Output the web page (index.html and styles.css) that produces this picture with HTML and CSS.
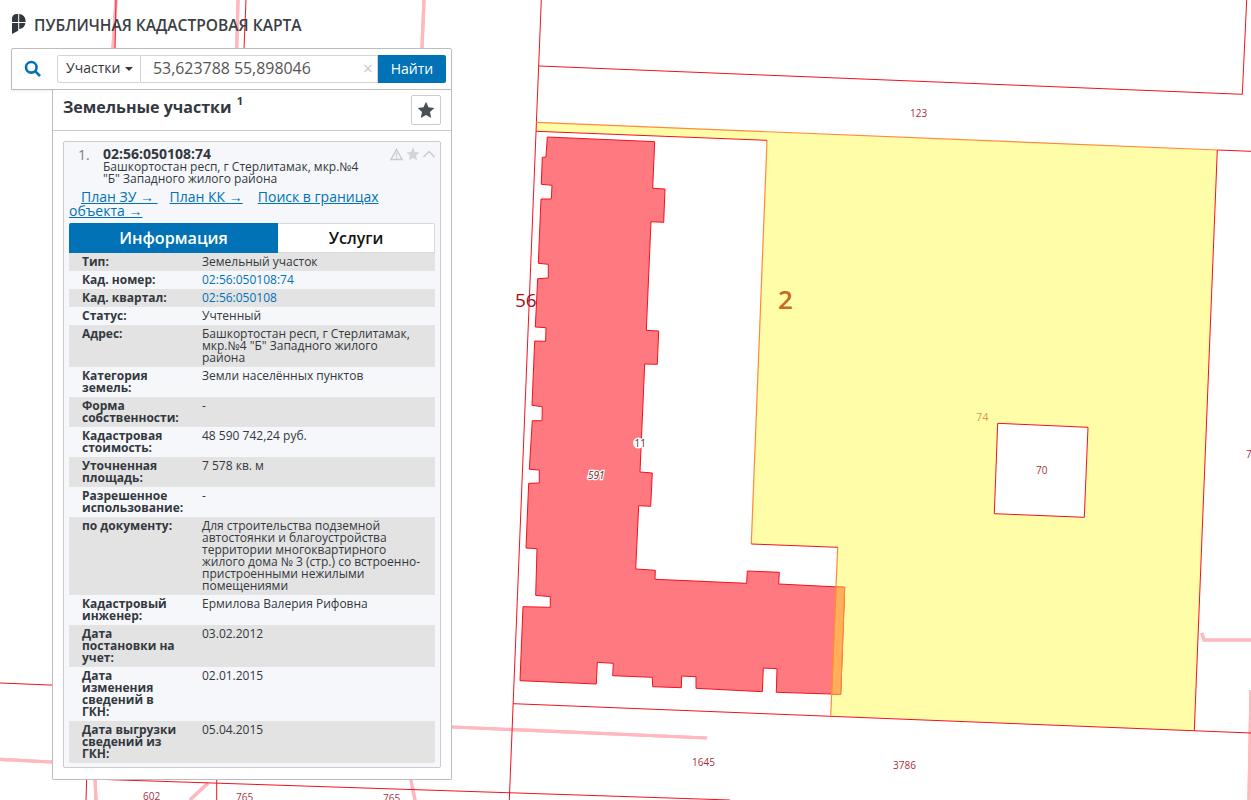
FILE: index.html
```html
<!DOCTYPE html>
<html lang="ru">
<head>
<meta charset="utf-8">
<title>Публичная кадастровая карта</title>
<link rel="stylesheet" href="styles.css">
</head>
<body>
<svg class="map" width="1251" height="800" viewBox="0 0 1251 800">
  <g id="pinks" class="pink">
    <polyline points="116,0 113,48"/>
    <polyline points="238,0 236.7,48"/>
    <polyline points="424,0 422,48"/>
    <polyline points="0,759.3 52,762"/>
    <polyline points="452,727 707,738"/>
    <polyline points="95,779 96,800"/>
    <polyline points="208,783 190,800"/>
    <polyline points="410.7,779 415,800"/>
    <polyline points="1201.7,633 1204,640 1251,640"/>
    <polyline points="1251,690 1249,800"/>
  </g>
  <use href="#pinks" class="pink-core"/>
  <path class="yellow" fill-rule="evenodd" d="M536.3 122.3 1217.3 150 1194.3 730.7 830.7 715.7 837.7 547.3 751.3 544 767 140.3 536 131.3ZM997.7 423.3 994.3 513.7 1084.3 517.3 1088 427.3Z"/>
  <polygon class="red" points="547.3,137 654.7,141.7 652.7,188.3 665,189 663.7,222.3 651,221.7 646.3,330.3 658.7,331 657.3,364.3 644.7,364 640,472 652.3,473 650.7,506.3 638.7,505.7 635.7,569 655.3,570.3 655,579.3 746.7,583.3 747.3,571 779.3,572.3 778.7,584 844.7,587.3 840.7,694.3 776.3,692.3 777,668.7 763.3,668 762.3,691.7 696,688.3 696,676.7 681.7,676 681.3,687.7 652.7,686.7 652.3,677.3 612.7,675.7 613.3,663.3 597.3,662.3 596.3,684 520,680.7 523,606.7 550.3,607.3 550.3,596.7 535.7,595.3 537,548.7 526,548 528.7,483.3 539.3,483 539.3,470 529.3,469.3 532.3,420.7 542,420.7 542.3,406.7 532,405.3 534.7,341 545.7,341.3 546,327.7 535.3,327 537.7,278.7 548.3,278 548.3,264.3 538.3,263.3 541,199 551.3,199 552,185.3 541.3,184.3 542.3,157.3 546,157"/>
  <polygon class="overlap" points="836,587 844.7,587.3 840.7,694.3 831.6,694"/>
  <g class="lines">
    <polyline points="541.3,0 509.3,800"/>
    <polyline points="539,66 1242.3,94.3 1246.7,0"/>
    <polyline points="1217.3,150 1251,151.3"/>
    <polyline points="0,683 200,691"/>
    <polyline points="513.3,703.7 1251,733"/>
    <polyline points="90,779 730,800"/>
    <polyline points="86.7,779 86,800"/>
    <polyline points="216.7,779 216.7,800"/>
    <polyline points="246,0 244,48"/>
    <polyline points="116,0 115,48"/>
  </g>
  <g class="edge-orange">
    <polyline points="536.3,122.3 1217.3,150"/>
    <polyline points="767,140.3 751.3,544"/>
    <polyline points="837.7,547.3 830.7,715.7"/>
  </g>
  <g class="lines">
    <polyline points="536,131.3 767,140.3"/>
    <polyline points="1217.3,150 1194.3,730.7"/>
    <polyline points="751.3,544 837.7,547.3"/>
    <polygon points="997.7,423.3 994.3,513.7 1084.3,517.3 1088,427.3"/>
  </g>
  <circle class="blob" cx="638.5" cy="443" r="5.5"/>
  <text class="t-dark t-19" x="515" y="307">56</text>
  <text class="t-orange t-26" x="778" y="309">2</text>
  <text class="t-light t-11" x="976" y="421">74</text>
  <text class="t-red t-10" x="1036" y="474">70</text>
  <text class="t-red t-10" x="910" y="117">123</text>
  <text class="t-red t-10" x="692" y="766">1645</text>
  <text class="t-red t-10" x="893" y="769">3786</text>
  <text class="t-red t-10" x="1246" y="458">7</text>
  <text class="t-red t-10" x="143" y="800">602</text>
  <text class="t-red t-10" x="236" y="801">765</text>
  <text class="t-red t-10" x="383" y="802">765</text>
  <text class="t-halo t-10 t-it" x="588" y="479">591</text>
  <text class="t-ink t-10" x="634.5" y="447">11</text>
</svg>

<header class="brand">
  <svg class="logo" width="14" height="20" viewBox="0 0 14 20"><path d="M0 4.5A4.5 4.5 0 0 1 4.5 0H6.2V8H0ZM7.2 0A6.6 6.6 0 0 1 13.6 6.5V8H7.2ZM0 9H6.2V16.8L0 20ZM7.2 9H13.4A6.6 6.6 0 0 1 7.2 15Z"/></svg>
  <span class="brand-title">ПУБЛИЧНАЯ КАДАСТРОВАЯ КАРТА</span>
</header>

<div class="widget">
  <div class="search">
    <svg class="search-icon" width="18" height="18" viewBox="0 0 18 18"><circle cx="7.3" cy="7.3" r="5.3"/><line x1="11.2" y1="11.2" x2="16" y2="16"/></svg>
    <div class="search-group">
      <div class="select">Участки<span class="caret"></span></div>
      <div class="query"><span>53,623788 55,898046</span><span class="clear">×</span></div>
      <button class="go">Найти</button>
    </div>
  </div>
  <div class="results">
    <div class="results-head">
      <h2>Земельные участки <sup>1</sup></h2>
      <button class="fav"><svg width="18" height="18" viewBox="0 0 18 18"><path class="star-dark" d="M9 .8 11.5 6.3 17.3 7 13 11 14.2 17 9 14 3.8 17 5 11 .7 7 6.5 6.3Z"/></svg></button>
    </div>
    <div class="card">
      <div class="card-head">
        <span class="num">1.</span>
        <div class="card-title">
          <strong>02:56:050108:74</strong>
          <span>Башкортостан респ, г Стерлитамак, мкр.№4<br>"Б" Западного жилого района</span>
        </div>
        <div class="card-tools">
          <svg width="13" height="13" viewBox="0 0 13 13"><path class="tri" d="M6.5 1.5 12 11.5H1Z"/><path class="tri-mark" d="M6.5 4.7V8.5M6.5 9.3V10.5"/></svg>
          <svg width="14" height="14" viewBox="0 0 18 18"><path class="star-light" d="M9 .8 11.5 6.3 17.3 7 13 11 14.2 17 9 14 3.8 17 5 11 .7 7 6.5 6.3Z"/></svg>
          <svg width="12" height="8" viewBox="0 0 12 8"><polyline class="chev" points="0.5,7 6,1.5 11.5,7"/></svg>
        </div>
      </div>
      <p class="links"><a>План ЗУ →&nbsp;</a><a>План КК →</a><a>Поиск в границах объекта →</a></p>
      <div class="tabs"><div class="tab active">Информация</div><div class="tab">Услуги</div></div>
      <div class="rows">
        <div class="row"><b>Тип:</b><span>Земельный участок</span></div>
        <div class="row"><b>Кад. номер:</b><a>02:56:050108:74</a></div>
        <div class="row"><b>Кад. квартал:</b><a>02:56:050108</a></div>
        <div class="row"><b>Статус:</b><span>Учтенный</span></div>
        <div class="row"><b>Адрес:</b><span>Башкортостан респ, г Стерлитамак, мкр.№4 "Б" Западного жилого района</span></div>
        <div class="row"><b>Категория земель:</b><span>Земли населённых пунктов</span></div>
        <div class="row"><b>Форма собственности:</b><span>-</span></div>
        <div class="row"><b>Кадастровая стоимость:</b><span>48 590 742,24 руб.</span></div>
        <div class="row"><b>Уточненная площадь:</b><span>7 578 кв. м</span></div>
        <div class="row"><b>Разрешенное использование:</b><span>-</span></div>
        <div class="row"><b>по документу:</b><span>Для строительства подземной автостоянки и благоустройства территории многоквартирного жилого дома № 3 (стр.) со встроенно-пристроенными нежилыми помещениями</span></div>
        <div class="row"><b>Кадастровый инженер:</b><span>Ермилова Валерия Рифовна</span></div>
        <div class="row"><b>Дата постановки на учет:</b><span>03.02.2012</span></div>
        <div class="row"><b>Дата изменения сведений в ГКН:</b><span>02.01.2015</span></div>
        <div class="row"><b>Дата выгрузки сведений из ГКН:</b><span>05.04.2015</span></div>
      </div>
    </div>
  </div>
</div>
</body>
</html>
```

FILE: styles.css
```css
* { box-sizing: border-box; }
html, body { margin: 0; height: 800px; overflow: hidden; background: #fff; }
body { position: relative; font-family: "Open Sans", "Liberation Sans", sans-serif; color: #33383e; }

/* map */
.map { position: absolute; left: 0; top: 0; display: block; }
.map polyline, .map polygon { fill: none; }
.map .pink { stroke: #ffb8bd; stroke-width: 3.2; }
.map .pink-core { stroke: #ff8f98; stroke-width: 1; }
.map .lines polyline, .map .lines polygon { stroke: #f5101e; stroke-width: 1; }
.map .edge-orange polyline { stroke: #ff8a3c; stroke-width: 1.2; }
.map .yellow { fill: #fffda8; }
.map .red { fill: #ff7a80; stroke: #f5101e; stroke-width: 1; }
.map .overlap { fill: #ffae5a; stroke: #ff8a3c; stroke-width: 1; }
.map .blob { fill: #fff; }
.map text { font-family: "Open Sans", sans-serif; }
.t-10 { font-size: 10px; }
.t-11 { font-size: 11px; }
.t-19 { font-size: 19px; }
.t-26 { font-size: 26px; font-weight: 600; }
.t-it { font-style: italic; }
.t-red { fill: #a8303c; }
.t-dark { fill: #a80c16; }
.t-orange { fill: #c86a20; }
.t-light { fill: #dc9a4c; }
.t-ink { fill: #5a2a2e; }
.t-halo { fill: #6a1a20; stroke: #fff; stroke-width: 2.4; paint-order: stroke; }

/* brand */
.brand { position: absolute; left: 12px; top: 14px; display: flex; align-items: center; gap: 8px; height: 20px; }
.logo path { fill: #33383e; }
.brand-title { font-size: 15.55px; font-weight: 600; color: #3a3f45; line-height: 20px; white-space: nowrap; margin-top: 2px; }

/* widget */
.widget { position: absolute; left: 11px; top: 48px; width: 441px; }
.search { height: 42px; background: #fff; border: 1px solid #bcbcbc; border-radius: 2px 2px 0 0; display: flex; align-items: center; padding-left: 12px; box-shadow: 0 1px 2px rgba(0,0,0,.08); }
.search-icon { margin-right: 15px; flex: none; }
.search-icon circle, .search-icon line { fill: none; stroke: #0072b5; stroke-width: 2.6; }
.search-group { display: flex; width: 389px; height: 28px; }
.select { width: 84px; height: 28px; border: 1px solid #d4d4d4; border-radius: 2px 0 0 2px; font-size: 14px; line-height: 26px; padding: 0 0 2px 8px; color: #33383e; display: flex; align-items: center; gap: 5px; }
.caret { width: 0; height: 0; border-style: solid; border-width: 4px 4px 0; border-color: #33383e transparent transparent; margin-top: 2px; }
.query { flex: 1; height: 28px; border: 1px solid #d4d4d4; border-left: 0; display: flex; align-items: center; justify-content: space-between; font-size: 15.9px; color: #555; padding: 0 4px 2px 12px; white-space: nowrap; }
.clear { color: #ccc; font-size: 18px; line-height: 1; }
.go { width: 68px; height: 28px; border: 0; border-radius: 0 2px 2px 0; background: #0072b5; color: #fff; font: 400 14px "Open Sans", sans-serif; padding: 0 0 2px; }

.results { margin-left: 41px; width: 400px; height: 690px; background: #fff; border: 1px solid #bcbcbc; border-top: 0; border-radius: 0 0 2px 2px; }
.results-head { height: 41px; border-bottom: 1px solid #ccc; padding: 5px 10px 0; display: flex; justify-content: space-between; align-items: flex-start; }
.results-head h2 { margin: 0; font-size: 16px; font-weight: 700; line-height: 25px; color: #33383e; }
.results-head sup { font-size: 11px; font-weight: 700; line-height: 0; position: relative; top: -2px; vertical-align: super; margin-left: 1px; }
.fav { width: 30px; height: 30px; padding: 0; background: #fff; border: 1px solid #ccc; border-radius: 2px; display: flex; align-items: center; justify-content: center; }
.star-dark { fill: #4a4f55; }
.star-light { fill: #d2d4d8; }

.card { margin: 10px 10px 0; width: 378px; height: 627px; background: #f5f7fa; border: 1px solid #ccc; border-radius: 2px; padding: 5px 5px 0; }
.card-head { display: flex; height: 40px; position: relative; }
.num { width: 34px; padding-left: 9px; font-size: 14px; line-height: 15px; color: #7a8088; }
.card-title { display: flex; flex-direction: column; font-size: 12px; line-height: 12px; color: #33383e; }
.card-title strong { font-size: 14px; line-height: 14px; font-weight: 700; }
.card-tools { position: absolute; right: 0; top: 0; display: flex; align-items: center; gap: 3px; }
.tri { fill: none; stroke: #c8cacd; stroke-width: 1.4; }
.tri-mark { stroke: #c8cacd; stroke-width: 1.4; fill: none; }
.chev { fill: none; stroke: #c8cacd; stroke-width: 1.4; }

.links { margin: 0; font-size: 14px; line-height: 14px; height: 36px; text-indent: 12px; padding-top: 3px; }
.links a { color: #0072b5; text-decoration: underline; margin-right: 12px; }
.links a:nth-child(2) { margin-right: 15px; }
.links a:last-child { margin-right: 0; }

.tabs { display: flex; height: 30px; }
.tab { flex: 157px 0 0; background: #fff; border: 1px solid #d8d8d8; border-left: 0; color: #111; font-size: 16px; font-weight: 600; text-align: center; line-height: 28px; border-radius: 0 2px 0 0; }
.tab.active { flex: 209px 0 0; background: #0072b5; border: 0; color: #fff; font-size: 16.2px; line-height: 30px; border-radius: 2px 0 0 0; }

.rows { font-size: 12px; line-height: 12px; }
.row { display: grid; grid-template-columns: 120px 1fr; padding: 3px 13px; }
.row:nth-child(odd) { background: #e3e3e3; }
.row b { font-weight: 700; padding-right: 18px; }
.row a { color: #0072b5; }
.row:last-child { border-radius: 0 0 2px 2px; }
```
